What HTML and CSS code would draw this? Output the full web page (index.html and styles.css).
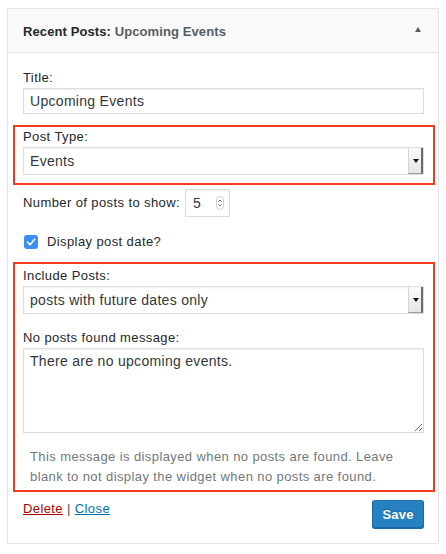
FILE: index.html
```html
<!DOCTYPE html>
<html>
<head>
<meta charset="utf-8">
<link rel="stylesheet" href="styles.css">
</head>
<body>
<div class="widget">
  <div class="widget-top">
    <h3 class="widget-title">Recent Posts: <span class="in-widget-title">Upcoming Events</span></h3>
    <span class="toggle"></span>
  </div>
  <div class="widget-inside">
    <div class="field">
      <label class="lbl lbl-title">Title:</label>
      <input class="text-input" type="text" value="Upcoming Events">
    </div>
    <div class="highlight hl-one">
      <label class="lbl">Post Type:</label>
      <div class="select-wrap">
        <select class="select"><option>Events</option></select>
        <span class="select-btn"><span class="caret"></span></span>
      </div>
    </div>
    <div class="num-row">
      <label class="lbl-inline">Number of posts to show:</label>
      <div class="num-wrap">
        <input class="num-input" type="text" value="5">
        <span class="spinner">
          <svg width="7" height="12" viewBox="0 0 7 12"><path d="M1.5 4.5 L3.5 2.5 L5.5 4.5 M1.5 7.5 L3.5 9.5 L5.5 7.5" fill="none" stroke="#555" stroke-width="1"/></svg>
        </span>
      </div>
    </div>
    <div class="check-row">
      <span class="checkbox">
        <svg width="14" height="14" viewBox="0 0 14 14"><path d="M3.6 7.2 L6 9.8 L10.6 4.2" fill="none" stroke="#fff" stroke-width="1.6" stroke-linecap="round" stroke-linejoin="round"/></svg>
      </span>
      <label class="lbl-inline">Display post date?</label>
    </div>
    <div class="highlight hl-two">
      <label class="lbl">Include Posts:</label>
      <div class="select-wrap">
        <select class="select"><option>posts with future dates only</option></select>
        <span class="select-btn"><span class="caret"></span></span>
      </div>
      <label class="lbl lbl-msg">No posts found message:</label>
      <textarea class="textarea">There are no upcoming events.</textarea>
      <p class="description">This message is displayed when no posts are found. Leave blank to not display the widget when no posts are found.</p>
    </div>
    <div class="control-actions">
      <div class="links"><a class="delete" href="#">Delete</a> <span class="sep">|</span> <a class="close" href="#">Close</a></div>
      <button class="save">Save</button>
    </div>
  </div>
</div>
</body>
</html>
```

FILE: styles.css
```css
* { box-sizing: border-box; }
body {
  margin: 0;
  background: #fff;
  font-family: "Liberation Sans", Arial, sans-serif;
  font-size: 13px;
  letter-spacing: 0.4px;
  color: #23282d;
}
.widget {
  margin: 8px 8px 0 7px;
  width: 432px;
  border: 1px solid #e5e5e5;
  box-shadow: 0 1px 1px rgba(0,0,0,0.04);
  background: #fff;
}
.widget-top {
  height: 44px;
  background: #f9f9f9;
  border-bottom: 1px solid #e5e5e5;
  display: flex;
  align-items: center;
  justify-content: space-between;
  padding: 0 17px 0 15px;
}
.widget-title {
  margin: 0;
  font-size: 13px;
  letter-spacing: 0.1px;
  font-weight: bold;
  color: #23282d;
  padding-top: 1px;
}
.in-widget-title { color: #555d66; }
.toggle {
  width: 0; height: 0;
  border-left: 3.5px solid transparent;
  border-right: 3.5px solid transparent;
  border-bottom: 5px solid #555d66;
  margin-top: -2px;
}
.widget-inside {
  padding: 16px 14px 15px 15px;
  display: flex;
  flex-direction: column;
}
.lbl {
  display: block;
  line-height: 18px;
  margin-bottom: 1px;
}
.text-input {
  display: block;
  width: 100%;
  height: 26px;
  border: 1px solid #ddd;
  box-shadow: inset 0 1px 2px rgba(0,0,0,0.07);
  font-family: inherit;
  font-size: 14px;
  letter-spacing: 0.3px;
  color: #32373c;
  padding: 0 6px;
  margin: 0;
  outline: none;
}
.highlight {
  margin: 11px -11px 0 -10px;
  border: 2px solid #f63a1e;
  padding: 1px 9px 8px 8px;
}
.select-wrap {
  position: relative;
  height: 28px;
}
.select {
  -webkit-appearance: none;
  appearance: none;
  display: block;
  width: 100%;
  height: 28px;
  border: 1px solid #ddd;
  background: #fff;
  box-shadow: inset 0 1px 2px rgba(0,0,0,0.07);
  font-family: inherit;
  font-size: 14px;
  letter-spacing: 0.3px;
  color: #32373c;
  padding: 0 6px;
  margin: 0;
  border-radius: 0;
  outline: none;
}
.select-btn {
  position: absolute;
  right: 1px;
  top: 1px;
  bottom: 1px;
  width: 15px;
  background: linear-gradient(#fafafa, #e6e6e6);
  border-left: 1px solid #d4d4d4;
  border-right: 2px solid #6b6b6b;
  border-bottom: 1px solid #9a9a9a;
  display: flex;
  align-items: center;
  justify-content: center;
}
.caret {
  width: 0; height: 0;
  border-left: 3px solid transparent;
  border-right: 3px solid transparent;
  border-top: 4px solid #111;
  margin-left: 1px;
}
.num-row {
  display: flex;
  align-items: center;
  margin-top: 4px;
  height: 28px;
}
.lbl-inline { line-height: 18px; }
.num-wrap {
  position: relative;
  margin-left: 5px;
  width: 45px;
  height: 28px;
}
.num-input {
  width: 45px;
  height: 28px;
  border: 1px solid #ddd;
  box-shadow: inset 0 1px 2px rgba(0,0,0,0.07);
  font-family: inherit;
  font-size: 14px;
  color: #32373c;
  padding: 0 7px;
  margin: 0;
  outline: none;
}
.spinner {
  position: absolute;
  left: 31px;
  top: 7px;
  width: 8px;
  height: 14px;
  border: 1px solid #cfcfcf;
  border-radius: 4px;
  display: flex;
  align-items: center;
  justify-content: center;
  background: #fff;
}
.check-row {
  display: flex;
  align-items: center;
  margin-top: 16px;
  padding-left: 1px;
  height: 18px;
}
.checkbox {
  width: 14px;
  height: 14px;
  border-radius: 3px;
  background: #3b8ff4;
  display: flex;
  margin-right: 9px;
}
.hl-two {
  margin-top: 11px;
  padding-top: 3px;
  padding-bottom: 3px;
}
.lbl-msg { margin-top: 15px; }
.textarea {
  display: block;
  width: 100%;
  height: 85px;
  border: 1px solid #ddd;
  box-shadow: inset 0 1px 2px rgba(0,0,0,0.07);
  font-family: inherit;
  font-size: 14px;
  letter-spacing: 0.3px;
  line-height: 18px;
  color: #32373c;
  padding: 3px 6px;
  margin: 0;
  resize: both;
  outline: none;
}
.description {
  margin: 14px 0 0 7px;
  color: #72777c;
  line-height: 20px;
  font-size: 13px;
}
.control-actions {
  display: flex;
  justify-content: space-between;
  align-items: flex-start;
  margin-top: 8px;
}
.links { line-height: 18px; }
.delete { color: #a00; text-decoration: underline; }
.close { color: #0073aa; text-decoration: underline; }
.sep { color: #555; }
.save {
  width: 52px;
  height: 28px;
  background: #2681c0;
  border: 1px solid;
  border-color: #1f72ad #1b6aa3 #1b6aa3;
  border-radius: 3px;
  box-shadow: 0 1px 0 #1b6aa3;
  color: #fff;
  font-family: inherit;
  font-size: 13px;
  letter-spacing: 0.2px;
  font-weight: bold;
  text-shadow: 0 -1px 1px #1b6aa3;
  padding: 0;
}
```
